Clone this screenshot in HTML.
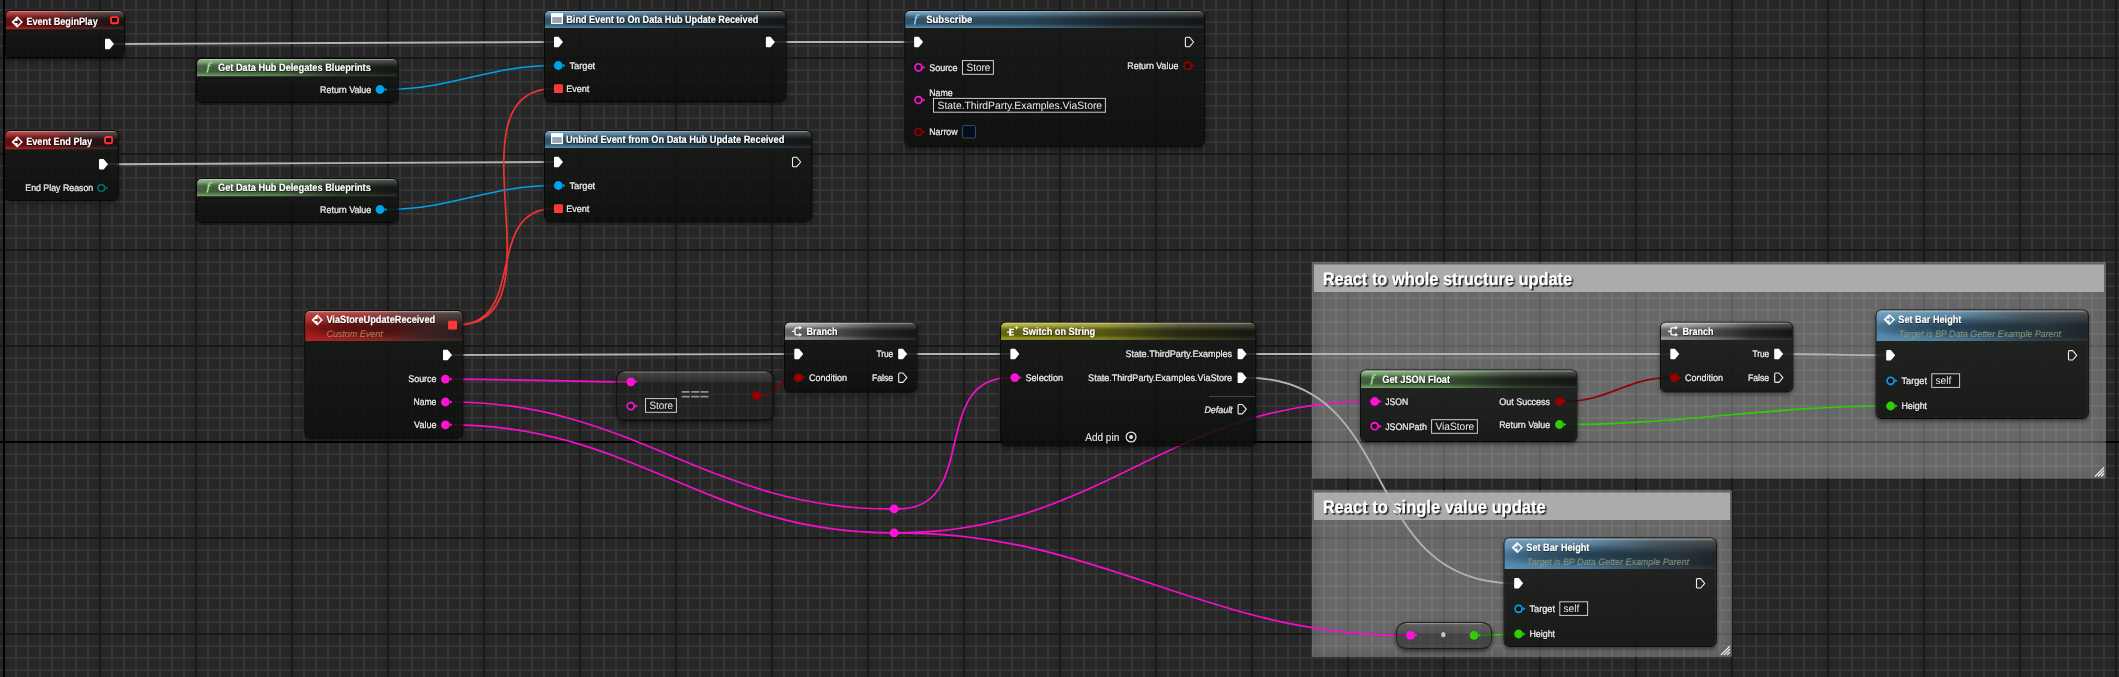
<!DOCTYPE html>
<html lang="en"><head><meta charset="utf-8"><title>Blueprint Graph</title>
<style>
html,body{margin:0;padding:0;background:#262626;overflow:hidden}
svg{display:block}
text{font-family:'Liberation Sans', sans-serif;white-space:pre;text-rendering:geometricPrecision}
.t{font-weight:700;font-size:10.7px;fill:#fff}
.p{font-size:9.6px;fill:#e8e8e8;stroke:#e8e8e8;stroke-width:.16px}
.b{font-size:10.6px;fill:#e8e8e8}
.s{font-style:italic;font-size:9.4px}
.c{font-weight:700;font-size:18.2px;fill:#fff}
</style></head><body>
<svg width="2119" height="677" viewBox="0 0 2119 677">
<defs>
<pattern id="gmin" width="12" height="12" patternUnits="userSpaceOnUse" patternTransform="translate(3 9)">
<rect x="0" y="0" width="2" height="12" fill="#353535"/><rect x="0" y="0" width="12" height="2" fill="#353535"/></pattern>
<pattern id="gmaj" width="96" height="96" patternUnits="userSpaceOnUse" patternTransform="translate(3 57)">
<rect x="0" y="0" width="2" height="96" fill="#191919"/><rect x="0" y="0" width="96" height="2" fill="#191919"/></pattern>
<filter id="blur" x="-20%" y="-20%" width="140%" height="150%"><feGaussianBlur stdDeviation="2"/></filter>
<filter id="blur3" x="-5%" y="-10%" width="110%" height="120%"><feGaussianBlur stdDeviation="3"/></filter>
<filter id="g0" x="-5%" y="-30%" width="110%" height="160%"><feOffset dx="0" dy="0"/></filter>
<filter id="ts" x="-5%" y="-30%" width="110%" height="170%"><feDropShadow dx="0.4" dy="0.6" stdDeviation="0.55" flood-color="#000" flood-opacity=".8"/></filter>
<filter id="cts" x="-5%" y="-30%" width="110%" height="170%"><feDropShadow dx="1.6" dy="1.6" stdDeviation="0.5" flood-color="#000" flood-opacity=".8"/></filter>
<linearGradient id="body" x1="0" y1="0" x2="0" y2="1"><stop offset="0" stop-color="#171917" stop-opacity=".85"/><stop offset="1" stop-color="#0b0d0b" stop-opacity=".85"/></linearGradient>
<linearGradient id="gloss" x1="0" y1="0" x2="0" y2="1"><stop offset="0" stop-color="#fff" stop-opacity=".36"/><stop offset=".1" stop-color="#fff" stop-opacity=".17"/><stop offset=".5" stop-color="#fff" stop-opacity="0"/><stop offset=".85" stop-color="#fff" stop-opacity="0"/><stop offset="1" stop-color="#fff" stop-opacity=".06"/></linearGradient>
<radialGradient id="core" cx=".36" cy=".55" r=".5" gradientTransform="translate(.36 .55) scale(.9 .78) translate(-.36 -.55)"><stop offset="0" stop-color="#000" stop-opacity=".45"/><stop offset=".55" stop-color="#000" stop-opacity=".3"/><stop offset="1" stop-color="#000" stop-opacity="0"/></radialGradient>
<linearGradient id="core2" x1="0" y1="0" x2="0" y2="1"><stop offset="0" stop-color="#000" stop-opacity="0"/><stop offset=".15" stop-color="#000" stop-opacity="0"/><stop offset=".38" stop-color="#000" stop-opacity=".4"/><stop offset=".74" stop-color="#000" stop-opacity=".4"/><stop offset=".93" stop-color="#000" stop-opacity=".08"/><stop offset="1" stop-color="#000" stop-opacity="0"/></linearGradient>
<linearGradient id="tred" x1="0" y1="0" x2="1" y2="0"><stop offset="0" stop-color="#a81b1b"/><stop offset="0.4" stop-color="#8e1a1a"/><stop offset="0.7" stop-color="#4a2020"/><stop offset="1" stop-color="#2a1e1e"/></linearGradient>
<linearGradient id="tgreen" x1="0" y1="0" x2="1" y2="0"><stop offset="0" stop-color="#72a067"/><stop offset="0.4" stop-color="#5a8251"/><stop offset="0.7" stop-color="#2f3d2b"/><stop offset="1" stop-color="#20251f"/></linearGradient>
<linearGradient id="tblue" x1="0" y1="0" x2="1" y2="0"><stop offset="0" stop-color="#5489ae"/><stop offset="0.4" stop-color="#40708f"/><stop offset="0.7" stop-color="#2a3c47"/><stop offset="1" stop-color="#1f2427"/></linearGradient>
<linearGradient id="tgrey" x1="0" y1="0" x2="1" y2="0"><stop offset="0" stop-color="#a8a8a8"/><stop offset="0.4" stop-color="#787878"/><stop offset="0.7" stop-color="#3a3a3a"/><stop offset="1" stop-color="#222222"/></linearGradient>
<linearGradient id="tolive" x1="0" y1="0" x2="1" y2="0"><stop offset="0" stop-color="#a8a81e"/><stop offset="0.4" stop-color="#90901e"/><stop offset="0.7" stop-color="#44441c"/><stop offset="1" stop-color="#262618"/></linearGradient>
<linearGradient id="cgloss" x1="0" y1="0" x2="0" y2="1"><stop offset="0" stop-color="#fff" stop-opacity=".2"/><stop offset=".2" stop-color="#fff" stop-opacity=".13"/><stop offset="1" stop-color="#fff" stop-opacity=".07"/></linearGradient>
</defs>
<rect width="2119" height="677" fill="#262626"/>
<rect width="2119" height="677" fill="url(#gmin)"/>
<rect width="2119" height="677" fill="url(#gmaj)"/>
<rect x="3" y="0" width="2" height="677" fill="#000"/>
<rect x="0" y="441" width="2119" height="2" fill="#000"/>

<clipPath id="cc1"><rect x="1312" y="262" width="794" height="216.5"/></clipPath>
<rect x="1312" y="262" width="794" height="216.5" rx="1" fill="#fff" fill-opacity=".262"/>
<g clip-path="url(#cc1)"><rect x="1317" y="267" width="784" height="206.5" fill="#fff" fill-opacity=".05" filter="url(#blur3)"/></g>
<rect x="1314" y="264.5" width="790" height="27.5" fill="#ababab"/>
<g filter="url(#cts)"><text class="c" x="1322.7" y="284.7" textLength="249.5" lengthAdjust="spacingAndGlyphs">React to whole structure update</text></g>
<path d="M2095,476.5 L2104,467.5 M2098,476.5 L2104,470.5 M2101,476.5 L2104,473.5" stroke="#f2f2f2" stroke-width="1.1" fill="none"/>
<clipPath id="cc2"><rect x="1312" y="490" width="420" height="167"/></clipPath>
<rect x="1312" y="490" width="420" height="167" rx="1" fill="#fff" fill-opacity=".262"/>
<g clip-path="url(#cc2)"><rect x="1317" y="495" width="410" height="157" fill="#fff" fill-opacity=".05" filter="url(#blur3)"/></g>
<rect x="1314" y="492.5" width="416" height="27.5" fill="#ababab"/>
<g filter="url(#cts)"><text class="c" x="1322.7" y="512.6" textLength="222.9" lengthAdjust="spacingAndGlyphs">React to single value update</text></g>
<path d="M1721,655 L1730,646 M1724,655 L1730,649 M1727,655 L1730,652" stroke="#f2f2f2" stroke-width="1.1" fill="none"/>
<g stroke-linecap="round">
<path d="M114.0,44.0 C261.3,44.0 406.7,42.0 554.0,42.0" stroke="#b2b2b2" stroke-width="1.9" fill="none" opacity="1"/>
<path d="M775.0,42.0 C821.3,42.0 867.7,42.0 914.0,42.0" stroke="#b2b2b2" stroke-width="1.9" fill="none" opacity="1"/>
<path d="M108.0,164.2 C257.4,164.2 404.6,162.0 554.0,162.0" stroke="#b2b2b2" stroke-width="1.9" fill="none" opacity="1"/>
<path d="M386.0,89.5 C450.0,89.5 490.0,65.5 554.0,65.5" stroke="#00a2ea" stroke-width="1.7" fill="none" opacity="1"/>
<path d="M386.0,209.5 C450.0,209.5 490.0,185.5 554.0,185.5" stroke="#00a2ea" stroke-width="1.7" fill="none" opacity="1"/>
<path d="M457.0,325.0 C568.1,325.0 442.9,88.6 554.0,88.6" stroke="#f03434" stroke-width="1.7" fill="none" opacity="1"/>
<path d="M457.0,325.0 C528.1,325.0 482.9,208.6 554.0,208.6" stroke="#f03434" stroke-width="1.7" fill="none" opacity="1"/>
<path d="M452.0,355.0 C566.3,355.0 679.7,354.0 794.0,354.0" stroke="#b2b2b2" stroke-width="1.9" fill="none" opacity="1"/>
<path d="M451.0,379.1 C510.2,379.1 566.8,381.8 626.0,381.8" stroke="#f60ecc" stroke-width="1.7" fill="none" opacity="1"/>
<path d="M762.0,395.5 C778.6,395.5 777.4,377.7 794.0,377.7" stroke="#8c0606" stroke-width="1.7" fill="none" opacity="1"/>
<path d="M907.0,354.0 C941.3,354.0 975.7,354.0 1010.0,354.0" stroke="#b2b2b2" stroke-width="1.9" fill="none" opacity="1"/>
<path d="M451.0,402.0 C633.0,402.0 708.0,508.9 890.0,508.9" stroke="#f60ecc" stroke-width="1.7" fill="none" opacity="1"/>
<path d="M899.0,508.9 C979.8,508.9 929.2,377.6 1010.0,377.6" stroke="#f60ecc" stroke-width="1.7" fill="none" opacity="1"/>
<path d="M451.0,424.8 C633.3,424.8 707.7,532.8 890.0,532.8" stroke="#f60ecc" stroke-width="1.7" fill="none" opacity="1"/>
<path d="M899.0,532.8 C1099.8,532.8 1169.2,401.5 1370.0,401.5" stroke="#f60ecc" stroke-width="1.7" fill="none" opacity="1"/>
<path d="M899.0,532.8 C1102.1,532.8 1202.9,635.2 1406.0,635.2" stroke="#f60ecc" stroke-width="1.7" fill="none" opacity="1"/>
<path d="M1246.0,354.0 C1387.3,354.0 1528.7,354.0 1670.0,354.0" stroke="#b2b2b2" stroke-width="1.9" fill="none" opacity="1"/>
<path d="M1246.0,377.7 C1403.9,377.7 1356.1,583.3 1514.0,583.3" stroke="#b2b2b2" stroke-width="1.9" fill="none" opacity="1"/>
<path d="M1565.0,401.5 C1607.9,401.5 1627.1,377.7 1670.0,377.7" stroke="#8c0606" stroke-width="1.7" fill="none" opacity="1"/>
<path d="M1565.0,424.5 C1678.2,424.5 1772.8,406.0 1886.0,406.0" stroke="#30cc08" stroke-width="1.7" fill="none" opacity="1"/>
<path d="M1783.0,354.0 C1817.8,354.0 1851.2,355.3 1886.0,355.3" stroke="#b2b2b2" stroke-width="1.9" fill="none" opacity="1"/>
<path d="M1480.0,635.2 C1491.7,635.2 1502.3,634.0 1514.0,634.0" stroke="#30cc08" stroke-width="1.7" fill="none" opacity="1"/>
</g>
<clipPath id="nc1"><path clip-rule="evenodd" d="M-14,-9 H144 V81 H-14 Z M11,11 H119 Q124,11 124,16 V52 Q124,57 119,57 H11 Q6,57 6,52 V16 Q6,11 11,11 Z"/></clipPath>
<g clip-path="url(#nc1)"><rect x="5" y="12" width="120" height="48" rx="6" fill="#000" opacity=".5" filter="url(#blur)"/>
<rect x="5" y="10" width="120" height="48" rx="6" fill="#050505" opacity=".9"/></g>
<rect x="6" y="11" width="118" height="46" rx="5" fill="url(#body)"/>
<path d="M6,29.3 V16 Q6,11 11,11 H119 Q124,11 124,16 V29.3 Z" fill="url(#tred)"/>
<path d="M6,29.3 V16 Q6,11 11,11 H119 Q124,11 124,16 V29.3 Z" fill="url(#core2)"/>
<path d="M6,29.3 V16 Q6,11 11,11 H119 Q124,11 124,16 V29.3 Z" fill="url(#gloss)"/>
<path d="M10,11.5 H120" stroke="#fff" stroke-opacity=".28" stroke-width="1"/>
<path d="M17.20,16.30 L22.90,22.00 L17.20,27.70 L11.50,22.00 Z M14.50,21.00 H17.50 V18.40 L20.90,22.00 L17.50,25.60 V23.00 H14.50 Z" fill="#fff" fill-rule="evenodd"/>
<g filter="url(#ts)">
<text class="t" x="26.4" y="24.8" textLength="71.3" lengthAdjust="spacingAndGlyphs">Event BeginPlay</text>
</g>
<rect x="111.00" y="17.10" width="7.1" height="6.2" rx="1.4" fill="#1c0000" stroke="#ff3232" stroke-width="1.9"/>
<path d="M106.0,38.8 H109.6 L114.0,44.0 L109.6,49.2 H106.0 Q105.0,49.2 105.0,48.2 V39.8 Q105.0,38.8 106.0,38.8 Z" fill="#fff"/>
<clipPath id="nc2"><path clip-rule="evenodd" d="M-14.5,111 H137.7 V223.7 H-14.5 Z M10.5,131 H112.7 Q117.7,131 117.7,136 V194.7 Q117.7,199.7 112.7,199.7 H10.5 Q5.5,199.7 5.5,194.7 V136 Q5.5,131 10.5,131 Z"/></clipPath>
<g clip-path="url(#nc2)"><rect x="4.5" y="132" width="114.2" height="70.69999999999999" rx="6" fill="#000" opacity=".5" filter="url(#blur)"/>
<rect x="4.5" y="130" width="114.2" height="70.69999999999999" rx="6" fill="#050505" opacity=".9"/></g>
<rect x="5.5" y="131" width="112.2" height="68.69999999999999" rx="5" fill="url(#body)"/>
<path d="M5.5,149.3 V136 Q5.5,131 10.5,131 H112.7 Q117.7,131 117.7,136 V149.3 Z" fill="url(#tred)"/>
<path d="M5.5,149.3 V136 Q5.5,131 10.5,131 H112.7 Q117.7,131 117.7,136 V149.3 Z" fill="url(#core2)"/>
<path d="M5.5,149.3 V136 Q5.5,131 10.5,131 H112.7 Q117.7,131 117.7,136 V149.3 Z" fill="url(#gloss)"/>
<path d="M9.5,131.5 H113.7" stroke="#fff" stroke-opacity=".28" stroke-width="1"/>
<path d="M17.20,136.20 L22.90,141.90 L17.20,147.60 L11.50,141.90 Z M14.50,140.90 H17.50 V138.30 L20.90,141.90 L17.50,145.50 V142.90 H14.50 Z" fill="#fff" fill-rule="evenodd"/>
<g filter="url(#ts)">
<text class="t" x="26.2" y="144.9" textLength="66.0" lengthAdjust="spacingAndGlyphs">Event End Play</text>
<text class="p" x="25.3" y="191" textLength="67.9" lengthAdjust="spacingAndGlyphs">End Play Reason</text>
</g>
<rect x="105.05" y="137.00" width="7.1" height="6.2" rx="1.4" fill="#1c0000" stroke="#ff3232" stroke-width="1.9"/>
<path d="M100.0,159.0 H103.6 L108.0,164.2 L103.6,169.4 H100.0 Q99.0,169.4 99.0,168.4 V160.0 Q99.0,159.0 100.0,159.0 Z" fill="#fff"/>
<circle cx="101.3" cy="188" r="3.45" fill="#0c0c0c" stroke="#006e68" stroke-width="1.8"/>
<path d="M105.9,186.3 L108.2,188.0 L105.9,189.7 Z" fill="#006e68"/>
<clipPath id="nc3"><path clip-rule="evenodd" d="M177,39 H417.5 V126 H177 Z M202,59 H392.5 Q397.5,59 397.5,64 V97 Q397.5,102 392.5,102 H202 Q197,102 197,97 V64 Q197,59 202,59 Z"/></clipPath>
<g clip-path="url(#nc3)"><rect x="196" y="60" width="202.5" height="45" rx="6" fill="#000" opacity=".5" filter="url(#blur)"/>
<rect x="196" y="58" width="202.5" height="45" rx="6" fill="#050505" opacity=".9"/></g>
<rect x="197" y="59" width="200.5" height="43" rx="5" fill="url(#body)"/>
<path d="M197,76.2 V64 Q197,59 202,59 H392.5 Q397.5,59 397.5,64 V76.2 Z" fill="url(#tgreen)"/>
<path d="M197,76.2 V64 Q197,59 202,59 H392.5 Q397.5,59 397.5,64 V76.2 Z" fill="url(#core2)"/>
<path d="M197,76.2 V64 Q197,59 202,59 H392.5 Q397.5,59 397.5,64 V76.2 Z" fill="url(#gloss)"/>
<path d="M201,59.5 H393.5" stroke="#fff" stroke-opacity=".28" stroke-width="1"/>
<g filter="url(#g0)"><text transform="translate(206.4 69.8) scale(1.3 1)" style="font-family:'Liberation Serif',serif;font-style:italic;font-size:10.8px" fill="#a6e08c" stroke="#a6e08c" stroke-width=".25">f</text></g>
<g filter="url(#ts)">
<text class="t" x="218" y="70.9" textLength="152.8" lengthAdjust="spacingAndGlyphs">Get Data Hub Delegates Blueprints</text>
<text class="p" x="320.1" y="92.9" textLength="51.1" lengthAdjust="spacingAndGlyphs">Return Value</text>
</g>
<circle cx="380" cy="89.5" r="4.4" fill="#00a2ea"/>
<path d="M384.6,87.8 L386.9,89.5 L384.6,91.2 Z" fill="#00a2ea"/>
<clipPath id="nc4"><path clip-rule="evenodd" d="M177,159 H417.5 V246 H177 Z M202,179 H392.5 Q397.5,179 397.5,184 V217 Q397.5,222 392.5,222 H202 Q197,222 197,217 V184 Q197,179 202,179 Z"/></clipPath>
<g clip-path="url(#nc4)"><rect x="196" y="180" width="202.5" height="45" rx="6" fill="#000" opacity=".5" filter="url(#blur)"/>
<rect x="196" y="178" width="202.5" height="45" rx="6" fill="#050505" opacity=".9"/></g>
<rect x="197" y="179" width="200.5" height="43" rx="5" fill="url(#body)"/>
<path d="M197,196.2 V184 Q197,179 202,179 H392.5 Q397.5,179 397.5,184 V196.2 Z" fill="url(#tgreen)"/>
<path d="M197,196.2 V184 Q197,179 202,179 H392.5 Q397.5,179 397.5,184 V196.2 Z" fill="url(#core2)"/>
<path d="M197,196.2 V184 Q197,179 202,179 H392.5 Q397.5,179 397.5,184 V196.2 Z" fill="url(#gloss)"/>
<path d="M201,179.5 H393.5" stroke="#fff" stroke-opacity=".28" stroke-width="1"/>
<g filter="url(#g0)"><text transform="translate(206.4 189.8) scale(1.3 1)" style="font-family:'Liberation Serif',serif;font-style:italic;font-size:10.8px" fill="#a6e08c" stroke="#a6e08c" stroke-width=".25">f</text></g>
<g filter="url(#ts)">
<text class="t" x="218" y="190.9" textLength="152.8" lengthAdjust="spacingAndGlyphs">Get Data Hub Delegates Blueprints</text>
<text class="p" x="320.1" y="212.9" textLength="51.1" lengthAdjust="spacingAndGlyphs">Return Value</text>
</g>
<circle cx="380" cy="209.5" r="4.4" fill="#00a2ea"/>
<path d="M384.6,207.8 L386.9,209.5 L384.6,211.2 Z" fill="#00a2ea"/>
<clipPath id="nc5"><path clip-rule="evenodd" d="M525,-9 H805.4 V125 H525 Z M550,11 H780.4 Q785.4,11 785.4,16 V96 Q785.4,101 780.4,101 H550 Q545,101 545,96 V16 Q545,11 550,11 Z"/></clipPath>
<g clip-path="url(#nc5)"><rect x="544" y="12" width="242.39999999999998" height="92" rx="6" fill="#000" opacity=".5" filter="url(#blur)"/>
<rect x="544" y="10" width="242.39999999999998" height="92" rx="6" fill="#050505" opacity=".9"/></g>
<rect x="545" y="11" width="240.39999999999998" height="90" rx="5" fill="url(#body)"/>
<path d="M545,28 V16 Q545,11 550,11 H780.4 Q785.4,11 785.4,16 V28 Z" fill="url(#tblue)"/>
<path d="M545,28 V16 Q545,11 550,11 H780.4 Q785.4,11 785.4,16 V28 Z" fill="url(#core2)"/>
<path d="M545,28 V16 Q545,11 550,11 H780.4 Q785.4,11 785.4,16 V28 Z" fill="url(#gloss)"/>
<path d="M549,11.5 H781.4" stroke="#fff" stroke-opacity=".28" stroke-width="1"/>
<rect x="551" y="13.1" width="12" height="11" fill="#fff"/>
<rect x="552.2" y="17.1" width="9.6" height="5.8" fill="#98a6b2"/>
<g filter="url(#ts)">
<text class="t" x="566.3" y="22.8" textLength="192.0" lengthAdjust="spacingAndGlyphs">Bind Event to On Data Hub Update Received</text>
<text class="p" x="569.4" y="68.9" textLength="25.8" lengthAdjust="spacingAndGlyphs">Target</text>
<text class="p" x="566.3" y="91.7" textLength="23.0" lengthAdjust="spacingAndGlyphs">Event</text>
</g>
<path d="M555.0,36.8 H558.6 L563.0,42.0 L558.6,47.2 H555.0 Q554.0,47.2 554.0,46.2 V37.8 Q554.0,36.8 555.0,36.8 Z" fill="#fff"/>
<path d="M766.9,36.8 H770.5 L774.9,42.0 L770.5,47.2 H766.9 Q765.9,47.2 765.9,46.2 V37.8 Q765.9,36.8 766.9,36.8 Z" fill="#fff"/>
<circle cx="558.3" cy="65.5" r="4.4" fill="#00a2ea"/>
<path d="M562.9,63.8 L565.2,65.5 L562.9,67.2 Z" fill="#00a2ea"/>
<rect x="554.0" y="84.2" width="9" height="8.8" rx="1" fill="#fa3a3a"/>
<clipPath id="nc6"><path clip-rule="evenodd" d="M525,111 H831.1 V244.8 H525 Z M550,131 H806.1 Q811.1,131 811.1,136 V215.8 Q811.1,220.8 806.1,220.8 H550 Q545,220.8 545,215.8 V136 Q545,131 550,131 Z"/></clipPath>
<g clip-path="url(#nc6)"><rect x="544" y="132" width="268.1" height="91.80000000000001" rx="6" fill="#000" opacity=".5" filter="url(#blur)"/>
<rect x="544" y="130" width="268.1" height="91.80000000000001" rx="6" fill="#050505" opacity=".9"/></g>
<rect x="545" y="131" width="266.1" height="89.80000000000001" rx="5" fill="url(#body)"/>
<path d="M545,148 V136 Q545,131 550,131 H806.1 Q811.1,131 811.1,136 V148 Z" fill="url(#tblue)"/>
<path d="M545,148 V136 Q545,131 550,131 H806.1 Q811.1,131 811.1,136 V148 Z" fill="url(#core2)"/>
<path d="M545,148 V136 Q545,131 550,131 H806.1 Q811.1,131 811.1,136 V148 Z" fill="url(#gloss)"/>
<path d="M549,131.5 H807.1" stroke="#fff" stroke-opacity=".28" stroke-width="1"/>
<rect x="551" y="133.1" width="12" height="11" fill="#fff"/>
<rect x="552.2" y="137.1" width="9.6" height="5.8" fill="#98a6b2"/>
<g filter="url(#ts)">
<text class="t" x="566" y="142.8" textLength="218.3" lengthAdjust="spacingAndGlyphs">Unbind Event from On Data Hub Update Received</text>
<text class="p" x="569.4" y="188.9" textLength="25.8" lengthAdjust="spacingAndGlyphs">Target</text>
<text class="p" x="566.3" y="211.7" textLength="23.0" lengthAdjust="spacingAndGlyphs">Event</text>
</g>
<path d="M555.0,156.8 H558.6 L563.0,162.0 L558.6,167.2 H555.0 Q554.0,167.2 554.0,166.2 V157.8 Q554.0,156.8 555.0,156.8 Z" fill="#fff"/>
<path d="M793.5,157.3 H796.7 L800.7,162.0 L796.7,166.7 H793.5 Q792.5,166.7 792.5,165.7 V158.3 Q792.5,157.3 793.5,157.3 Z" fill="none" stroke="#f0f0f0" stroke-width="1.1" stroke-linejoin="round"/>
<circle cx="558.3" cy="185.5" r="4.4" fill="#00a2ea"/>
<path d="M562.9,183.8 L565.2,185.5 L562.9,187.2 Z" fill="#00a2ea"/>
<rect x="554.0" y="204.2" width="9" height="8.8" rx="1" fill="#fa3a3a"/>
<clipPath id="nc7"><path clip-rule="evenodd" d="M885.4,-9 H1224 V169.5 H885.4 Z M910.4,11 H1199 Q1204,11 1204,16 V140.5 Q1204,145.5 1199,145.5 H910.4 Q905.4,145.5 905.4,140.5 V16 Q905.4,11 910.4,11 Z"/></clipPath>
<g clip-path="url(#nc7)"><rect x="904.4" y="12" width="300.6" height="136.5" rx="6" fill="#000" opacity=".5" filter="url(#blur)"/>
<rect x="904.4" y="10" width="300.6" height="136.5" rx="6" fill="#050505" opacity=".9"/></g>
<rect x="905.4" y="11" width="298.6" height="134.5" rx="5" fill="url(#body)"/>
<path d="M905.4,28 V16 Q905.4,11 910.4,11 H1199 Q1204,11 1204,16 V28 Z" fill="url(#tblue)"/>
<path d="M905.4,28 V16 Q905.4,11 910.4,11 H1199 Q1204,11 1204,16 V28 Z" fill="url(#core2)"/>
<path d="M905.4,28 V16 Q905.4,11 910.4,11 H1199 Q1204,11 1204,16 V28 Z" fill="url(#gloss)"/>
<path d="M909.4,11.5 H1200" stroke="#fff" stroke-opacity=".28" stroke-width="1"/>
<g filter="url(#g0)"><text transform="translate(913.7 21.8) scale(1.3 1)" style="font-family:'Liberation Serif',serif;font-style:italic;font-size:10.8px" fill="#8fd0ff" stroke="#8fd0ff" stroke-width=".25">f</text></g>
<g filter="url(#ts)">
<text class="t" x="926.2" y="23" textLength="46.1" lengthAdjust="spacingAndGlyphs">Subscribe</text>
<text class="p" x="929.2" y="70.7" textLength="28.4" lengthAdjust="spacingAndGlyphs">Source</text>
<text class="p" x="1127.3" y="69.2" textLength="51.1" lengthAdjust="spacingAndGlyphs">Return Value</text>
<text class="p" x="929.2" y="95.7" textLength="23.4" lengthAdjust="spacingAndGlyphs">Name</text>
<text class="p" x="929.2" y="134.9" textLength="28.4" lengthAdjust="spacingAndGlyphs">Narrow</text>
</g>
<path d="M915.1,36.8 H918.7 L923.1,42.0 L918.7,47.2 H915.1 Q914.1,47.2 914.1,46.2 V37.8 Q914.1,36.8 915.1,36.8 Z" fill="#fff"/>
<path d="M1186.4,37.3 H1189.6 L1193.6,42.0 L1189.6,46.7 H1186.4 Q1185.4,46.7 1185.4,45.7 V38.3 Q1185.4,37.3 1186.4,37.3 Z" fill="none" stroke="#f0f0f0" stroke-width="1.1" stroke-linejoin="round"/>
<circle cx="918.5" cy="67.4" r="3.45" fill="#0c0c0c" stroke="#ff12d6" stroke-width="1.8"/>
<path d="M923.1,65.7 L925.4,67.4 L923.1,69.1 Z" fill="#ff12d6"/>
<circle cx="1187.6" cy="65.7" r="3.45" fill="#0c0c0c" stroke="#980000" stroke-width="1.8"/>
<path d="M1192.2,64.0 L1194.5,65.7 L1192.2,67.4 Z" fill="#980000"/>
<circle cx="918.5" cy="100" r="3.45" fill="#0c0c0c" stroke="#ff12d6" stroke-width="1.8"/>
<path d="M923.1,98.3 L925.4,100.0 L923.1,101.7 Z" fill="#ff12d6"/>
<circle cx="918.5" cy="132" r="3.45" fill="#0c0c0c" stroke="#980000" stroke-width="1.8"/>
<path d="M923.1,130.3 L925.4,132.0 L923.1,133.7 Z" fill="#980000"/>
<rect x="962.5" y="60.6" width="30.9" height="13.7" fill="#0a0a0a" fill-opacity=".35" stroke="#cfcfcf" stroke-width="1"/>
<g filter="url(#g0)">
<text class="b" x="966.5" y="70.9" textLength="23.9" lengthAdjust="spacingAndGlyphs">Store</text>
</g>
<rect x="933.5" y="98.4" width="171.9" height="13.8" fill="#0a0a0a" fill-opacity=".35" stroke="#cfcfcf" stroke-width="1"/>
<g filter="url(#g0)">
<text class="b" x="937.5" y="109" textLength="164.6" lengthAdjust="spacingAndGlyphs">State.ThirdParty.Examples.ViaStore</text>
</g>
<rect x="962.5" y="125.6" width="13" height="12.4" rx="1" fill="#040d1e" stroke="#3d4a5e" stroke-width="1"/>
<clipPath id="nc8"><path clip-rule="evenodd" d="M285.3,291 H482.3 V461.2 H285.3 Z M310.3,311 H457.3 Q462.3,311 462.3,316 V432.2 Q462.3,437.2 457.3,437.2 H310.3 Q305.3,437.2 305.3,432.2 V316 Q305.3,311 310.3,311 Z"/></clipPath>
<g clip-path="url(#nc8)"><rect x="304.3" y="312" width="159.0" height="128.2" rx="6" fill="#000" opacity=".5" filter="url(#blur)"/>
<rect x="304.3" y="310" width="159.0" height="128.2" rx="6" fill="#050505" opacity=".9"/></g>
<rect x="305.3" y="311" width="157.0" height="126.19999999999999" rx="5" fill="url(#body)"/>
<path d="M305.3,341 V316 Q305.3,311 310.3,311 H457.3 Q462.3,311 462.3,316 V341 Z" fill="url(#tred)"/>
<path d="M305.3,341 V316 Q305.3,311 310.3,311 H457.3 Q462.3,311 462.3,316 V341 Z" fill="url(#core)"/>
<path d="M305.3,341 V316 Q305.3,311 310.3,311 H457.3 Q462.3,311 462.3,316 V341 Z" fill="url(#gloss)"/>
<path d="M309.3,311.5 H458.3" stroke="#fff" stroke-opacity=".28" stroke-width="1"/>
<path d="M317.20,314.20 L322.90,319.90 L317.20,325.60 L311.50,319.90 Z M314.50,318.90 H317.50 V316.30 L320.90,319.90 L317.50,323.50 V320.90 H314.50 Z" fill="#fff" fill-rule="evenodd"/>
<text class="s" x="326.4" y="336.6" textLength="56.4" lengthAdjust="spacingAndGlyphs" style="fill:#b3855e">Custom Event</text>
<g filter="url(#ts)">
<text class="t" x="326.4" y="323" textLength="108.8" lengthAdjust="spacingAndGlyphs">ViaStoreUpdateReceived</text>
<text class="p" x="408.3" y="382.1" textLength="28.1" lengthAdjust="spacingAndGlyphs">Source</text>
<text class="p" x="413.5" y="404.9" textLength="22.9" lengthAdjust="spacingAndGlyphs">Name</text>
<text class="p" x="414.1" y="428" textLength="22.3" lengthAdjust="spacingAndGlyphs">Value</text>
</g>
<rect x="448.1" y="320.7" width="9" height="8.8" rx="1" fill="#fa3a3a"/>
<path d="M444.0,349.8 H447.6 L452.0,355.0 L447.6,360.2 H444.0 Q443.0,360.2 443.0,359.2 V350.8 Q443.0,349.8 444.0,349.8 Z" fill="#fff"/>
<circle cx="445.4" cy="379.1" r="4.4" fill="#ff12d6"/>
<path d="M450.0,377.4 L452.3,379.1 L450.0,380.8 Z" fill="#ff12d6"/>
<circle cx="445.4" cy="402" r="4.4" fill="#ff12d6"/>
<path d="M450.0,400.3 L452.3,402.0 L450.0,403.7 Z" fill="#ff12d6"/>
<circle cx="445.4" cy="424.8" r="4.4" fill="#ff12d6"/>
<path d="M450.0,423.1 L452.3,424.8 L450.0,426.5 Z" fill="#ff12d6"/>
<clipPath id="nc9"><path clip-rule="evenodd" d="M596.6,350.8 H793.4 V443.8 H596.6 Z M625.6,370.8 H764.4 Q773.4,370.8 773.4,379.8 V410.8 Q773.4,419.8 764.4,419.8 H625.6 Q616.6,419.8 616.6,410.8 V379.8 Q616.6,370.8 625.6,370.8 Z"/></clipPath>
<g clip-path="url(#nc9)"><rect x="615.6" y="371.8" width="158.79999999999995" height="51.0" rx="10" fill="#000" opacity=".55" filter="url(#blur)"/></g>
<path d="M625.6,370.8 H764.4 Q773.4,370.8 773.4,379.8 V410.8 Q773.4,419.8 764.4,419.8 H625.6 Q616.6,419.8 616.6,410.8 V379.8 Q616.6,370.8 625.6,370.8 Z" fill="#1d1d1d" fill-opacity=".46" stroke="#0a0a0a" stroke-opacity=".7" stroke-width="1"/>
<path d="M617.4,381.40000000000003 V379.8 Q617.4,371.6 625.6,371.6 H764.4 Q772.6,371.6 772.6,379.8 V381.40000000000003 Z" fill="url(#cgloss)"/>
<path d="M623.6,372.0 H766.4" stroke="#fff" stroke-opacity=".3" stroke-width="1"/>
<g filter="url(#g0)">
<text class="b" x="681" y="400.3" textLength="28.2" lengthAdjust="spacingAndGlyphs" style="font-weight:700;font-size:17.5px;fill:#8e8e8e">===</text>
</g>
<circle cx="630.8" cy="381.8" r="4.4" fill="#ff12d6"/>
<path d="M635.4,380.1 L637.7,381.8 L635.4,383.5 Z" fill="#ff12d6"/>
<circle cx="630.8" cy="406.1" r="3.45" fill="#0c0c0c" stroke="#ff12d6" stroke-width="1.8"/>
<path d="M635.4,404.4 L637.7,406.1 L635.4,407.8 Z" fill="#ff12d6"/>
<circle cx="756.4" cy="395.5" r="4.4" fill="#980000"/>
<path d="M761.0,393.8 L763.3,395.5 L761.0,397.2 Z" fill="#980000"/>
<rect x="645.5" y="398.6" width="30.9" height="13.7" fill="#0a0a0a" fill-opacity=".35" stroke="#cfcfcf" stroke-width="1"/>
<g filter="url(#g0)">
<text class="b" x="649.4" y="409" textLength="23.6" lengthAdjust="spacingAndGlyphs">Store</text>
</g>
<clipPath id="nc10"><path clip-rule="evenodd" d="M765,302.8 H936.3 V415.2 H765 Z M790,322.8 H911.3 Q916.3,322.8 916.3,327.8 V386.2 Q916.3,391.2 911.3,391.2 H790 Q785,391.2 785,386.2 V327.8 Q785,322.8 790,322.8 Z"/></clipPath>
<g clip-path="url(#nc10)"><rect x="784" y="323.8" width="133.29999999999995" height="70.39999999999998" rx="6" fill="#000" opacity=".5" filter="url(#blur)"/>
<rect x="784" y="321.8" width="133.29999999999995" height="70.39999999999998" rx="6" fill="#050505" opacity=".9"/></g>
<rect x="785" y="322.8" width="131.29999999999995" height="68.39999999999998" rx="5" fill="url(#body)"/>
<path d="M785,339.8 V327.8 Q785,322.8 790,322.8 H911.3 Q916.3,322.8 916.3,327.8 V339.8 Z" fill="url(#tgrey)"/>
<path d="M785,339.8 V327.8 Q785,322.8 790,322.8 H911.3 Q916.3,322.8 916.3,327.8 V339.8 Z" fill="url(#core2)"/>
<path d="M785,339.8 V327.8 Q785,322.8 790,322.8 H911.3 Q916.3,322.8 916.3,327.8 V339.8 Z" fill="url(#gloss)"/>
<path d="M789,323.3 H912.3" stroke="#fff" stroke-opacity=".28" stroke-width="1"/>
<g fill="none" stroke="#fff" stroke-width="1.3"><path d="M791.8,331.3 H794.8"/><path d="M799.8,327.8 H796.0 Q795.0,327.8 795.0,328.8 V333.8 Q795.0,334.8 796.0,334.8 H799.8"/></g>
<path d="M799.1999999999999,325.8 L802.0,327.8 L799.1999999999999,329.8 Z M799.1999999999999,332.8 L802.0,334.8 L799.1999999999999,336.8 Z" fill="#fff"/>
<g filter="url(#ts)">
<text class="t" x="806.4" y="334.8" textLength="31.0" lengthAdjust="spacingAndGlyphs">Branch</text>
<text class="p" x="876.4" y="357" textLength="16.8" lengthAdjust="spacingAndGlyphs">True</text>
<text class="p" x="809" y="380.9" textLength="38.1" lengthAdjust="spacingAndGlyphs">Condition</text>
<text class="p" x="872" y="380.9" textLength="21.2" lengthAdjust="spacingAndGlyphs">False</text>
</g>
<path d="M795.3,348.8 H798.9 L803.3,354.0 L798.9,359.2 H795.3 Q794.3,359.2 794.3,358.2 V349.8 Q794.3,348.8 795.3,348.8 Z" fill="#fff"/>
<path d="M899.2,348.8 H902.8 L907.2,354.0 L902.8,359.2 H899.2 Q898.2,359.2 898.2,358.2 V349.8 Q898.2,348.8 899.2,348.8 Z" fill="#fff"/>
<path d="M899.7,373.0 H902.9 L906.9,377.7 L902.9,382.4 H899.7 Q898.7,382.4 898.7,381.4 V374.0 Q898.7,373.0 899.7,373.0 Z" fill="none" stroke="#f0f0f0" stroke-width="1.1" stroke-linejoin="round"/>
<circle cx="798.4" cy="377.7" r="4.4" fill="#980000"/>
<path d="M803.0,376.0 L805.3,377.7 L803.0,379.4 Z" fill="#980000"/>
<clipPath id="nc11"><path clip-rule="evenodd" d="M1641,302.8 H1812.3 V415.2 H1641 Z M1666,322.8 H1787.3 Q1792.3,322.8 1792.3,327.8 V386.2 Q1792.3,391.2 1787.3,391.2 H1666 Q1661,391.2 1661,386.2 V327.8 Q1661,322.8 1666,322.8 Z"/></clipPath>
<g clip-path="url(#nc11)"><rect x="1660" y="323.8" width="133.29999999999995" height="70.39999999999998" rx="6" fill="#000" opacity=".5" filter="url(#blur)"/>
<rect x="1660" y="321.8" width="133.29999999999995" height="70.39999999999998" rx="6" fill="#050505" opacity=".9"/></g>
<rect x="1661" y="322.8" width="131.29999999999995" height="68.39999999999998" rx="5" fill="url(#body)"/>
<path d="M1661,339.8 V327.8 Q1661,322.8 1666,322.8 H1787.3 Q1792.3,322.8 1792.3,327.8 V339.8 Z" fill="url(#tgrey)"/>
<path d="M1661,339.8 V327.8 Q1661,322.8 1666,322.8 H1787.3 Q1792.3,322.8 1792.3,327.8 V339.8 Z" fill="url(#core2)"/>
<path d="M1661,339.8 V327.8 Q1661,322.8 1666,322.8 H1787.3 Q1792.3,322.8 1792.3,327.8 V339.8 Z" fill="url(#gloss)"/>
<path d="M1665,323.3 H1788.3" stroke="#fff" stroke-opacity=".28" stroke-width="1"/>
<g fill="none" stroke="#fff" stroke-width="1.3"><path d="M1667.8,331.3 H1670.8"/><path d="M1675.8,327.8 H1672.0 Q1671.0,327.8 1671.0,328.8 V333.8 Q1671.0,334.8 1672.0,334.8 H1675.8"/></g>
<path d="M1675.2,325.8 L1678.0,327.8 L1675.2,329.8 Z M1675.2,332.8 L1678.0,334.8 L1675.2,336.8 Z" fill="#fff"/>
<g filter="url(#ts)">
<text class="t" x="1682.4" y="334.8" textLength="31.0" lengthAdjust="spacingAndGlyphs">Branch</text>
<text class="p" x="1752.4" y="357" textLength="16.8" lengthAdjust="spacingAndGlyphs">True</text>
<text class="p" x="1685" y="380.9" textLength="38.1" lengthAdjust="spacingAndGlyphs">Condition</text>
<text class="p" x="1748" y="380.9" textLength="21.2" lengthAdjust="spacingAndGlyphs">False</text>
</g>
<path d="M1671.3,348.8 H1674.9 L1679.3,354.0 L1674.9,359.2 H1671.3 Q1670.3,359.2 1670.3,358.2 V349.8 Q1670.3,348.8 1671.3,348.8 Z" fill="#fff"/>
<path d="M1775.2,348.8 H1778.8 L1783.2,354.0 L1778.8,359.2 H1775.2 Q1774.2,359.2 1774.2,358.2 V349.8 Q1774.2,348.8 1775.2,348.8 Z" fill="#fff"/>
<path d="M1775.7,373.0 H1778.9 L1782.9,377.7 L1778.9,382.4 H1775.7 Q1774.7,382.4 1774.7,381.4 V374.0 Q1774.7,373.0 1775.7,373.0 Z" fill="none" stroke="#f0f0f0" stroke-width="1.1" stroke-linejoin="round"/>
<circle cx="1674.4" cy="377.7" r="4.4" fill="#980000"/>
<path d="M1679.0,376.0 L1681.3,377.7 L1679.0,379.4 Z" fill="#980000"/>
<clipPath id="nc12"><path clip-rule="evenodd" d="M981.1,302.8 H1275.2 V468.7 H981.1 Z M1006.1,322.8 H1250.2 Q1255.2,322.8 1255.2,327.8 V439.7 Q1255.2,444.7 1250.2,444.7 H1006.1 Q1001.1,444.7 1001.1,439.7 V327.8 Q1001.1,322.8 1006.1,322.8 Z"/></clipPath>
<g clip-path="url(#nc12)"><rect x="1000.1" y="323.8" width="256.1" height="123.89999999999998" rx="6" fill="#000" opacity=".5" filter="url(#blur)"/>
<rect x="1000.1" y="321.8" width="256.1" height="123.89999999999998" rx="6" fill="#050505" opacity=".9"/></g>
<rect x="1001.1" y="322.8" width="254.10000000000002" height="121.89999999999998" rx="5" fill="url(#body)"/>
<path d="M1001.1,339.8 V327.8 Q1001.1,322.8 1006.1,322.8 H1250.2 Q1255.2,322.8 1255.2,327.8 V339.8 Z" fill="url(#tolive)"/>
<path d="M1001.1,339.8 V327.8 Q1001.1,322.8 1006.1,322.8 H1250.2 Q1255.2,322.8 1255.2,327.8 V339.8 Z" fill="url(#core2)"/>
<path d="M1001.1,339.8 V327.8 Q1001.1,322.8 1006.1,322.8 H1250.2 Q1255.2,322.8 1255.2,327.8 V339.8 Z" fill="url(#gloss)"/>
<path d="M1005.1,323.3 H1251.2" stroke="#fff" stroke-opacity=".28" stroke-width="1"/>
<g fill="none" stroke="#fff"><path stroke-width="1.8" d="M1010.1999999999999,328.7 V335.59999999999997"/><path stroke-width="1.3" d="M1009.3,329.34999999999997 H1013.9 M1007.0,332.09999999999997 H1013.5 M1009.3,334.95 H1013.9"/></g>
<path d="M1016.5999999999999,325.5 L1017.1499999999999,327.25 L1018.8999999999999,327.8 L1017.1499999999999,328.35 L1016.5999999999999,330.1 L1016.05,328.35 L1014.3,327.8 L1016.05,327.25 Z" fill="#fff"/>
<g filter="url(#ts)">
<text class="t" x="1022.6" y="335" textLength="72.6" lengthAdjust="spacingAndGlyphs">Switch on String</text>
<text class="p" x="1125.6" y="357.2" textLength="106.5" lengthAdjust="spacingAndGlyphs">State.ThirdParty.Examples</text>
<text class="p" x="1025.4" y="380.9" textLength="37.7" lengthAdjust="spacingAndGlyphs">Selection</text>
<text class="p" x="1088.1" y="380.9" textLength="144.0" lengthAdjust="spacingAndGlyphs">State.ThirdParty.Examples.ViaStore</text>
<text class="p" x="1204.4" y="413" textLength="28.2" lengthAdjust="spacingAndGlyphs" font-style="italic">Default</text>
<text class="b" x="1085.3" y="440.7" textLength="33.9" lengthAdjust="spacingAndGlyphs" style="font-size:11.3px">Add pin</text>
</g>
<rect x="1209" y="396" width="46" height="1" fill="#fff" fill-opacity=".22"/>
<path d="M1011.4,348.8 H1015.0 L1019.4,354.0 L1015.0,359.2 H1011.4 Q1010.4,359.2 1010.4,358.2 V349.8 Q1010.4,348.8 1011.4,348.8 Z" fill="#fff"/>
<path d="M1238.6,348.8 H1242.2 L1246.6,354.0 L1242.2,359.2 H1238.6 Q1237.6,359.2 1237.6,358.2 V349.8 Q1237.6,348.8 1238.6,348.8 Z" fill="#fff"/>
<path d="M1238.6,372.5 H1242.2 L1246.6,377.7 L1242.2,382.9 H1238.6 Q1237.6,382.9 1237.6,381.9 V373.5 Q1237.6,372.5 1238.6,372.5 Z" fill="#fff"/>
<path d="M1239.1,404.5 H1242.3 L1246.3,409.2 L1242.3,413.9 H1239.1 Q1238.1,413.9 1238.1,412.9 V405.5 Q1238.1,404.5 1239.1,404.5 Z" fill="none" stroke="#f0f0f0" stroke-width="1.1" stroke-linejoin="round"/>
<circle cx="1014.8" cy="377.6" r="4.4" fill="#ff12d6"/>
<path d="M1019.4,375.9 L1021.7,377.6 L1019.4,379.3 Z" fill="#ff12d6"/>
<circle cx="1131.1" cy="437" r="4.9" fill="none" stroke="#e8e8e8" stroke-width="1.2"/><circle cx="1131.1" cy="437" r="1.9" fill="#e8e8e8"/>
<clipPath id="nc13"><path clip-rule="evenodd" d="M1341,350.6 H1596.4 V465.1 H1341 Z M1366,370.6 H1571.4 Q1576.4,370.6 1576.4,375.6 V436.1 Q1576.4,441.1 1571.4,441.1 H1366 Q1361,441.1 1361,436.1 V375.6 Q1361,370.6 1366,370.6 Z"/></clipPath>
<g clip-path="url(#nc13)"><rect x="1360" y="371.6" width="217.4000000000001" height="72.5" rx="6" fill="#000" opacity=".5" filter="url(#blur)"/>
<rect x="1360" y="369.6" width="217.4000000000001" height="72.5" rx="6" fill="#050505" opacity=".9"/></g>
<rect x="1361" y="370.6" width="215.4000000000001" height="70.5" rx="5" fill="url(#body)"/>
<path d="M1361,387.90000000000003 V375.6 Q1361,370.6 1366,370.6 H1571.4 Q1576.4,370.6 1576.4,375.6 V387.90000000000003 Z" fill="url(#tgreen)"/>
<path d="M1361,387.90000000000003 V375.6 Q1361,370.6 1366,370.6 H1571.4 Q1576.4,370.6 1576.4,375.6 V387.90000000000003 Z" fill="url(#core2)"/>
<path d="M1361,387.90000000000003 V375.6 Q1361,370.6 1366,370.6 H1571.4 Q1576.4,370.6 1576.4,375.6 V387.90000000000003 Z" fill="url(#gloss)"/>
<path d="M1365,371.1 H1572.4" stroke="#fff" stroke-opacity=".28" stroke-width="1"/>
<g filter="url(#g0)"><text transform="translate(1370.4 381.6) scale(1.3 1)" style="font-family:'Liberation Serif',serif;font-style:italic;font-size:10.8px" fill="#a6e08c" stroke="#a6e08c" stroke-width=".25">f</text></g>
<g filter="url(#ts)">
<text class="t" x="1382.3" y="382.9" textLength="67.7" lengthAdjust="spacingAndGlyphs">Get JSON Float</text>
<text class="p" x="1385.2" y="404.9" textLength="22.9" lengthAdjust="spacingAndGlyphs">JSON</text>
<text class="p" x="1499.2" y="404.9" textLength="50.9" lengthAdjust="spacingAndGlyphs">Out Success</text>
<text class="p" x="1385.2" y="429.8" textLength="41.7" lengthAdjust="spacingAndGlyphs">JSONPath</text>
<text class="p" x="1499.2" y="427.8" textLength="50.9" lengthAdjust="spacingAndGlyphs">Return Value</text>
</g>
<circle cx="1374.7" cy="401.5" r="4.4" fill="#ff12d6"/>
<path d="M1379.3,399.8 L1381.6,401.5 L1379.3,403.2 Z" fill="#ff12d6"/>
<circle cx="1374.7" cy="426.2" r="3.45" fill="#0c0c0c" stroke="#ff12d6" stroke-width="1.8"/>
<path d="M1379.3,424.5 L1381.6,426.2 L1379.3,427.9 Z" fill="#ff12d6"/>
<circle cx="1559.4" cy="401.5" r="4.4" fill="#980000"/>
<path d="M1564.0,399.8 L1566.3,401.5 L1564.0,403.2 Z" fill="#980000"/>
<circle cx="1559.4" cy="424.5" r="4.4" fill="#30cc08"/>
<path d="M1564.0,422.8 L1566.3,424.5 L1564.0,426.2 Z" fill="#30cc08"/>
<rect x="1431.6" y="419.7" width="45.8" height="13.6" fill="#0a0a0a" fill-opacity=".35" stroke="#cfcfcf" stroke-width="1"/>
<g filter="url(#g0)">
<text class="b" x="1435.4" y="430.2" textLength="38.9" lengthAdjust="spacingAndGlyphs">ViaStore</text>
</g>
<clipPath id="nc14"><path clip-rule="evenodd" d="M1856.6,290.6 H2107.8 V442.1 H1856.6 Z M1881.6,310.6 H2082.8 Q2087.8,310.6 2087.8,315.6 V413.1 Q2087.8,418.1 2082.8,418.1 H1881.6 Q1876.6,418.1 1876.6,413.1 V315.6 Q1876.6,310.6 1881.6,310.6 Z"/></clipPath>
<g clip-path="url(#nc14)"><rect x="1875.6" y="311.6" width="213.20000000000027" height="109.5" rx="6" fill="#000" opacity=".5" filter="url(#blur)"/>
<rect x="1875.6" y="309.6" width="213.20000000000027" height="109.5" rx="6" fill="#050505" opacity=".9"/></g>
<rect x="1876.6" y="310.6" width="211.20000000000027" height="107.5" rx="5" fill="url(#body)"/>
<path d="M1876.6,340.90000000000003 V315.6 Q1876.6,310.6 1881.6,310.6 H2082.8 Q2087.8,310.6 2087.8,315.6 V340.90000000000003 Z" fill="url(#tblue)"/>
<path d="M1876.6,340.90000000000003 V315.6 Q1876.6,310.6 1881.6,310.6 H2082.8 Q2087.8,310.6 2087.8,315.6 V340.90000000000003 Z" fill="url(#core)"/>
<path d="M1876.6,340.90000000000003 V315.6 Q1876.6,310.6 1881.6,310.6 H2082.8 Q2087.8,310.6 2087.8,315.6 V340.90000000000003 Z" fill="url(#gloss)"/>
<path d="M1880.6,311.1 H2083.8" stroke="#fff" stroke-opacity=".28" stroke-width="1"/>
<path d="M1889.30,313.90 L1895.00,319.60 L1889.30,325.30 L1883.60,319.60 Z M1886.60,318.60 H1889.60 V316.00 L1893.00,319.60 L1889.60,323.20 V320.60 H1886.60 Z" fill="#fff" fill-rule="evenodd"/>
<text class="s" x="1898.6" y="336.9" textLength="162.3" lengthAdjust="spacingAndGlyphs" style="fill:#8c997e">Target is BP Data Getter Example Parent</text>
<g filter="url(#ts)">
<text class="t" x="1898.3" y="322.7" textLength="63.1" lengthAdjust="spacingAndGlyphs">Set Bar Height</text>
<text class="p" x="1901.5" y="384.1" textLength="25.5" lengthAdjust="spacingAndGlyphs">Target</text>
<text class="p" x="1901.5" y="409" textLength="25.5" lengthAdjust="spacingAndGlyphs">Height</text>
</g>
<path d="M1887.2,350.1 H1890.8 L1895.2,355.3 L1890.8,360.5 H1887.2 Q1886.2,360.5 1886.2,359.5 V351.1 Q1886.2,350.1 1887.2,350.1 Z" fill="#fff"/>
<path d="M2069.5,350.6 H2072.7 L2076.7,355.3 L2072.7,360.0 H2069.5 Q2068.5,360.0 2068.5,359.0 V351.6 Q2068.5,350.6 2069.5,350.6 Z" fill="none" stroke="#f0f0f0" stroke-width="1.1" stroke-linejoin="round"/>
<circle cx="1890.6" cy="380.8" r="3.45" fill="#0c0c0c" stroke="#0a9ae0" stroke-width="1.8"/>
<path d="M1895.2,379.1 L1897.5,380.8 L1895.2,382.5 Z" fill="#0a9ae0"/>
<circle cx="1890.6" cy="406" r="4.4" fill="#30cc08"/>
<path d="M1895.2,404.3 L1897.5,406.0 L1895.2,407.7 Z" fill="#30cc08"/>
<rect x="1931.8" y="373.8" width="27.8" height="13.6" fill="#0a0a0a" fill-opacity=".35" stroke="#cfcfcf" stroke-width="1"/>
<g filter="url(#g0)">
<text class="b" x="1935.5" y="384.3" textLength="15.9" lengthAdjust="spacingAndGlyphs">self</text>
</g>
<clipPath id="nc15"><path clip-rule="evenodd" d="M1484.6,518.6 H1735.8000000000002 V670.1 H1484.6 Z M1509.6,538.6 H1710.8000000000002 Q1715.8000000000002,538.6 1715.8000000000002,543.6 V641.1 Q1715.8000000000002,646.1 1710.8000000000002,646.1 H1509.6 Q1504.6,646.1 1504.6,641.1 V543.6 Q1504.6,538.6 1509.6,538.6 Z"/></clipPath>
<g clip-path="url(#nc15)"><rect x="1503.6" y="539.6" width="213.20000000000027" height="109.5" rx="6" fill="#000" opacity=".5" filter="url(#blur)"/>
<rect x="1503.6" y="537.6" width="213.20000000000027" height="109.5" rx="6" fill="#050505" opacity=".9"/></g>
<rect x="1504.6" y="538.6" width="211.20000000000027" height="107.5" rx="5" fill="url(#body)"/>
<path d="M1504.6,568.9 V543.6 Q1504.6,538.6 1509.6,538.6 H1710.8000000000002 Q1715.8000000000002,538.6 1715.8000000000002,543.6 V568.9 Z" fill="url(#tblue)"/>
<path d="M1504.6,568.9 V543.6 Q1504.6,538.6 1509.6,538.6 H1710.8000000000002 Q1715.8000000000002,538.6 1715.8000000000002,543.6 V568.9 Z" fill="url(#core)"/>
<path d="M1504.6,568.9 V543.6 Q1504.6,538.6 1509.6,538.6 H1710.8000000000002 Q1715.8000000000002,538.6 1715.8000000000002,543.6 V568.9 Z" fill="url(#gloss)"/>
<path d="M1508.6,539.1 H1711.8000000000002" stroke="#fff" stroke-opacity=".28" stroke-width="1"/>
<path d="M1517.30,541.90 L1523.00,547.60 L1517.30,553.30 L1511.60,547.60 Z M1514.60,546.60 H1517.60 V544.00 L1521.00,547.60 L1517.60,551.20 V548.60 H1514.60 Z" fill="#fff" fill-rule="evenodd"/>
<text class="s" x="1526.6" y="564.9" textLength="162.3" lengthAdjust="spacingAndGlyphs" style="fill:#8c997e">Target is BP Data Getter Example Parent</text>
<g filter="url(#ts)">
<text class="t" x="1526.3" y="550.7" textLength="63.1" lengthAdjust="spacingAndGlyphs">Set Bar Height</text>
<text class="p" x="1529.5" y="612.1" textLength="25.5" lengthAdjust="spacingAndGlyphs">Target</text>
<text class="p" x="1529.5" y="637" textLength="25.5" lengthAdjust="spacingAndGlyphs">Height</text>
</g>
<path d="M1515.2,578.1 H1518.8 L1523.2,583.3 L1518.8,588.5 H1515.2 Q1514.2,588.5 1514.2,587.5 V579.1 Q1514.2,578.1 1515.2,578.1 Z" fill="#fff"/>
<path d="M1697.5,578.6 H1700.7 L1704.7,583.3 L1700.7,588.0 H1697.5 Q1696.5,588.0 1696.5,587.0 V579.6 Q1696.5,578.6 1697.5,578.6 Z" fill="none" stroke="#f0f0f0" stroke-width="1.1" stroke-linejoin="round"/>
<circle cx="1518.6" cy="608.8" r="3.45" fill="#0c0c0c" stroke="#0a9ae0" stroke-width="1.8"/>
<path d="M1523.2,607.1 L1525.5,608.8 L1523.2,610.5 Z" fill="#0a9ae0"/>
<circle cx="1518.6" cy="634" r="4.4" fill="#30cc08"/>
<path d="M1523.2,632.3 L1525.5,634.0 L1523.2,635.7 Z" fill="#30cc08"/>
<rect x="1559.8" y="601.8" width="27.8" height="13.6" fill="#0a0a0a" fill-opacity=".35" stroke="#cfcfcf" stroke-width="1"/>
<g filter="url(#g0)">
<text class="b" x="1563.5" y="612.3" textLength="15.9" lengthAdjust="spacingAndGlyphs">self</text>
</g>
<clipPath id="nc16"><path clip-rule="evenodd" d="M1376.4,602.4 H1511.8 V672.5 H1376.4 Z M1407.4,622.4 H1480.8 Q1491.8,622.4 1491.8,633.4 V637.5 Q1491.8,648.5 1480.8,648.5 H1407.4 Q1396.4,648.5 1396.4,637.5 V633.4 Q1396.4,622.4 1407.4,622.4 Z"/></clipPath>
<g clip-path="url(#nc16)"><rect x="1395.4" y="623.4" width="97.39999999999986" height="28.100000000000023" rx="12" fill="#000" opacity=".55" filter="url(#blur)"/></g>
<path d="M1407.4,622.4 H1480.8 Q1491.8,622.4 1491.8,633.4 V637.5 Q1491.8,648.5 1480.8,648.5 H1407.4 Q1396.4,648.5 1396.4,637.5 V633.4 Q1396.4,622.4 1407.4,622.4 Z" fill="#1d1d1d" fill-opacity=".46" stroke="#0a0a0a" stroke-opacity=".7" stroke-width="1"/>
<path d="M1397.2,633.8 V633.4 Q1397.2,623.1999999999999 1407.4,623.1999999999999 H1480.8 Q1491.0,623.1999999999999 1491.0,633.4 V633.8 Z" fill="url(#cgloss)"/>
<path d="M1405.4,623.5999999999999 H1482.8" stroke="#fff" stroke-opacity=".3" stroke-width="1"/>
<circle cx="1410.5" cy="635.3" r="4.4" fill="#ff12d6"/>
<path d="M1415.1,633.6 L1417.4,635.3 L1415.1,637.0 Z" fill="#ff12d6"/>
<circle cx="1474" cy="635.3" r="4.4" fill="#30cc08"/>
<path d="M1478.6,633.6 L1480.9,635.3 L1478.6,637.0 Z" fill="#30cc08"/>
<ellipse cx="1443.3" cy="634.7" rx="2.2" ry="2.6" fill="#c8c8c8"/>
<circle cx="894.1" cy="508.9" r="4.4" fill="#ff12d6"/>
<path d="M898.7,507.2 L901.0,508.9 L898.7,510.6 Z" fill="#ff12d6"/>
<circle cx="894.1" cy="532.8" r="4.4" fill="#ff12d6"/>
<path d="M898.7,531.1 L901.0,532.8 L898.7,534.5 Z" fill="#ff12d6"/>
</svg></body></html>
